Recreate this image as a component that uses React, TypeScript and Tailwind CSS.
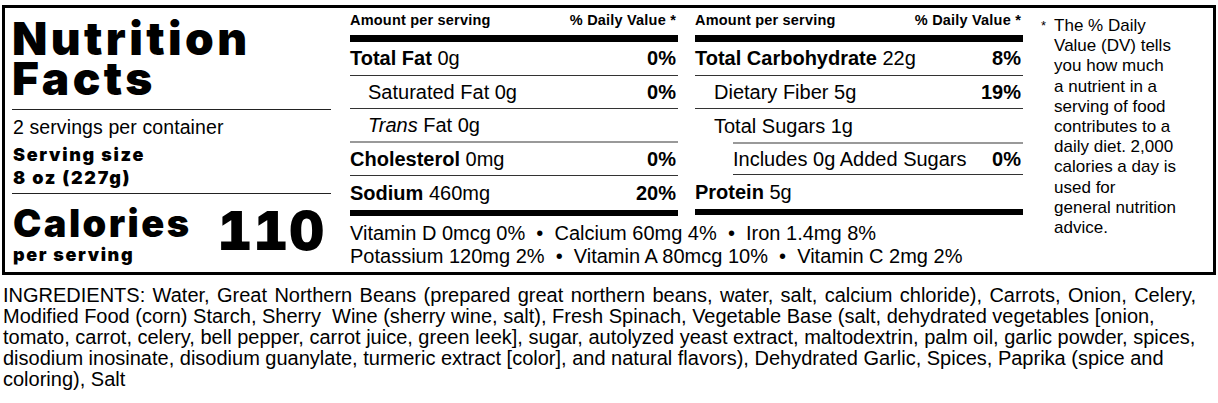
import React from "react";

const F = { fontFamily: '"Liberation Sans", Arial, sans-serif' };
const BLACK = { fontFamily: "Inter, sans-serif", fontWeight: 900 };

function Row({
  children,
  pct,
  border = "border-[#333]",
  indent = "",
  last = false,
}: {
  children: React.ReactNode;
  pct?: string;
  border?: string;
  indent?: string;
  last?: boolean;
}) {
  return (
    <div
      className={`h-[33.6px] flex items-center justify-between text-[20px] leading-none ${
        last ? "" : `border-b ${border}`
      } ${indent}`}
    >
      <div>{children}</div>
      {pct && <div className="font-bold pr-[2px]">{pct}</div>}
    </div>
  );
}

function Header() {
  return (
    <div className="h-[34px] flex items-start justify-between pt-[5px] text-[14.5px] font-bold leading-none border-b-[7px] border-black tracking-[0.2px]">
      <span>Amount per serving</span>
      <span className="pr-[2px]">% Daily Value *</span>
    </div>
  );
}

export default function App() {
  return (
    <div className="w-[1218px] h-[403px] bg-white text-black overflow-hidden" style={F}>
      <div className="ml-[2px] mt-[5px] w-[1214px] h-[270px] border-[3px] border-black flex">
        {/* Column 1 */}
        <div className="w-[326px] pl-[7px] shrink-0">
          <div
            className="pt-[10px] pb-[11px] border-b border-[#222] text-[46px] leading-[40px] tracking-[3.4px]"
            style={BLACK}
          >
            <div>Nutrition</div>
            <div>Facts</div>
          </div>
          <div className="pl-[1px]">
            <div className="text-[19.5px] leading-none pt-[8px] tracking-[0.1px]">2 servings per container</div>
            <div className="text-[18px] leading-[23px] pt-[5px] pb-[4px] tracking-[1.7px]" style={BLACK}>
              <div>Serving size</div>
              <div>8 oz (227g)</div>
            </div>
          </div>
          <div className="border-t border-[#222] flex items-start justify-between pl-[1px] pr-[6px]">
            <div>
              <div className="text-[38px] leading-none pt-[10px] tracking-[2.4px]" style={BLACK}>
                Calories
              </div>
              <div className="text-[18px] leading-none pt-[4px] tracking-[1.6px]" style={BLACK}>
                per serving
              </div>
            </div>
            <div className="text-[54px] leading-none pt-[10px] tabular-nums tracking-[1px]" style={BLACK}>
              110
            </div>
          </div>
        </div>

        {/* Column 2 */}
        <div className="ml-[19px] w-[328px] shrink-0">
          <Header />
          <Row pct="0%">
            <b>Total Fat</b> 0g
          </Row>
          <Row pct="0%" indent="pl-[18px]">
            Saturated Fat 0g
          </Row>
          <Row indent="pl-[18px]" border="border-[#999] border-b-2">
            <i>Trans</i> Fat 0g
          </Row>
          <Row pct="0%">
            <b>Cholesterol</b> 0mg
          </Row>
          <Row pct="20%" last>
            <b>Sodium</b> 460mg
          </Row>
          <div className="border-t-[6px] border-black text-[20px] leading-[23px] pt-[6px] whitespace-nowrap">
            <div>Vitamin D 0mcg 0% &nbsp;•&nbsp; Calcium 60mg 4% &nbsp;•&nbsp; Iron 1.4mg 8%</div>
            <div>Potassium 120mg 2% &nbsp;•&nbsp; Vitamin A 80mcg 10% &nbsp;•&nbsp; Vitamin C 2mg 2%</div>
          </div>
        </div>

        {/* Column 3 */}
        <div className="ml-[17px] w-[328px] shrink-0">
          <Header />
          <Row pct="8%">
            <b>Total Carbohydrate</b> 22g
          </Row>
          <Row pct="19%" indent="pl-[19px]">
            Dietary Fiber 5g
          </Row>
          <div className="h-[33.6px] flex items-center text-[20px] leading-none pl-[19px]">
            Total Sugars 1g
          </div>
          <div className="ml-[38px] h-[33.6px] flex items-center justify-between text-[20px] leading-none border-t-2 border-[#999] border-b border-b-[#333] -mt-[1px]">
            <span>Includes 0g Added Sugars</span>
            <span className="font-bold pr-[2px]">0%</span>
          </div>
          <Row last>
            <b>Protein</b> 5g
          </Row>
          <div className="border-t-[6px] border-black" />
        </div>

        {/* Footnote */}
        <div className="ml-[18px] flex-1 text-[17px] leading-[20.2px] pt-[8px] flex">
          <span className="text-[13px] pr-[8px] leading-[20.2px]">*</span>
          <div>
            The % Daily
            <br />
            Value (DV) tells
            <br />
            you how much
            <br />a nutrient in a
            <br />
            serving of food
            <br />
            contributes to a
            <br />
            daily diet. 2,000
            <br />
            calories a day is
            <br />
            used for
            <br />
            general nutrition
            <br />
            advice.
          </div>
        </div>
      </div>

      {/* Ingredients */}
      <div className="pl-[3px] pt-[10px] text-[20px] leading-[21px] whitespace-nowrap">
        <div className="[word-spacing:1.8px]">
          INGREDIENTS: Water, Great Northern Beans (prepared great northern beans, water, salt, calcium chloride), Carrots, Onion, Celery,
        </div>
        <div>
          Modified Food (corn) Starch, Sherry&nbsp; Wine (sherry wine, salt), Fresh Spinach, Vegetable Base (salt, dehydrated vegetables [onion,
        </div>
        <div>
          tomato, carrot, celery, bell pepper, carrot juice, green leek], sugar, autolyzed yeast extract, maltodextrin, palm oil, garlic powder, spices,
        </div>
        <div>
          disodium inosinate, disodium guanylate, turmeric extract [color], and natural flavors), Dehydrated Garlic, Spices, Paprika (spice and
        </div>
        <div>coloring), Salt</div>
      </div>
    </div>
  );
}
